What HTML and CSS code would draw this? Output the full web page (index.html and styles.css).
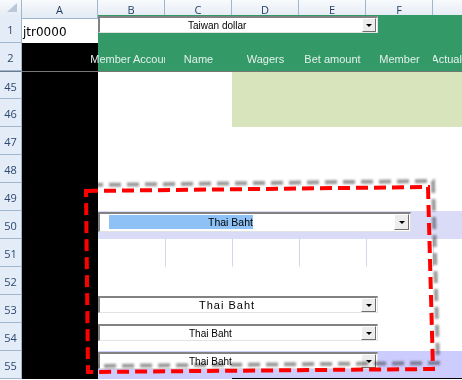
FILE: index.html
```html
<!DOCTYPE html>
<html lang="en">
  <head>
    <meta charset="UTF-8" />
    <meta name="viewport" content="width=device-width, initial-scale=1.0" />
    <title>Hoja de apuestas</title>
    <link rel="stylesheet" href="styles.css">
  </head>
  <body>
    <div class="sheet">
      <!-- Cabecera de columnas -->
      <div class="row head">
        <div class="corner">
          <svg width="22" height="14" viewBox="0 0 22 14"><polygon points="17,3 17,12 7,12" fill="#b9c7d9" /></svg>
        </div>
        <div class="col">A</div>
        <div class="col">B</div>
        <div class="col">C</div>
        <div class="col">D</div>
        <div class="col">E</div>
        <div class="col">F</div>
        <div class="col"></div>
      </div>

      <div class="row">
        <div class="num">1</div>
        <div class="cell user">jtr0000</div>
        <div class="band green">
          <div class="combo combo-top">
            <div class="combo-text">Taiwan dollar</div>
            <div class="combo-btn"></div>
          </div>
        </div>
      </div>

      <div class="row">
        <div class="num">2</div>
        <div class="cell black"></div>
        <div class="cell green title spill">Member Account</div>
        <div class="cell green title">Name</div>
        <div class="cell green title">Wagers</div>
        <div class="cell green title">Bet amount</div>
        <div class="cell green title">Member</div>
        <div class="cell green title">Actual amount</div>
      </div>

      <div class="row r45">
        <div class="num">45</div>
        <div class="cell black"></div>
        <div class="cell"></div>
        <div class="cell"></div>
        <div class="band-d light-green"></div>
      </div>
      <div class="row">
        <div class="num">46</div>
        <div class="cell black"></div>
        <div class="cell"></div>
        <div class="cell"></div>
        <div class="band-d light-green"></div>
      </div>
      <div class="row">
        <div class="num">47</div>
        <div class="cell black"></div>
      </div>
      <div class="row">
        <div class="num">48</div>
        <div class="cell black"></div>
      </div>
      <div class="row">
        <div class="num">49</div>
        <div class="cell black"></div>
      </div>

      <div class="row">
        <div class="num">50</div>
        <div class="cell black"></div>
        <div class="band lavender">
          <div class="combo combo-wide">
            <div class="combo-text"><span class="selected">Thai Baht</span></div>
            <div class="combo-btn"></div>
          </div>
        </div>
      </div>

      <div class="row">
        <div class="num">51</div>
        <div class="cell black"></div>
        <div class="cell"></div>
        <div class="cell gridline"></div>
        <div class="cell gridline"></div>
        <div class="cell gridline"></div>
        <div class="cell gridline"></div>
        <div class="cell gridline"></div>
      </div>
      <div class="row">
        <div class="num">52</div>
        <div class="cell black"></div>
      </div>

      <div class="row">
        <div class="num">53</div>
        <div class="cell black"></div>
        <div class="band">
          <div class="combo combo-spaced">
            <div class="combo-text">Thai Baht</div>
            <div class="combo-btn"></div>
          </div>
        </div>
      </div>
      <div class="row">
        <div class="num">54</div>
        <div class="cell black"></div>
        <div class="band">
          <div class="combo combo-small">
            <div class="combo-text">Thai Baht</div>
            <div class="combo-btn"></div>
          </div>
        </div>
      </div>
      <div class="row">
        <div class="num">55</div>
        <div class="cell black"></div>
        <div class="band lavender last">
          <div class="combo combo-small">
            <div class="combo-text">Thai Baht</div>
            <div class="combo-btn"></div>
          </div>
        </div>
      </div>

      <!-- Marca roja dibujada encima -->
      <svg class="mark" width="462" height="380" viewBox="0 0 462 380">
        <defs>
          <filter id="blur"><feGaussianBlur stdDeviation="1.1" /></filter>
        </defs>
        <path class="mark-shadow" d="M91 185 L433 181 L438 363 L93 366 Z" filter="url(#blur)" />
        <path class="mark-line" d="M86 191 L428 187 L433 369 L88 372 Z" />
      </svg>
    </div>
  </body>
</html>
```

FILE: styles.css
```css
body {
  margin: 0;
  background-color: white;
  font-family: "Liberation Sans", Arial, sans-serif;
  overflow: hidden;
}

.sheet {
  position: relative;
  width: 462px;
  height: 380px;
  overflow: hidden;
}

.row {
  display: grid;
  grid-template-columns: 22px 76px 67px 67px 67px 67px 67px 67px;
  width: 500px;
  height: 28px;
}

/* cabecera */
.head {
  height: 15px;
}

.corner,
.col {
  box-sizing: border-box;
  background: linear-gradient(#f8fafd, #e3eaf4);
  border-bottom: 1px solid #9eb6ce;
  border-right: 1px solid #9eb6ce;
}

.col {
  display: flex;
  justify-content: center;
  align-items: center;
  font-family: "Open Sans", sans-serif;
  font-size: 11px;
  color: #1f3a5f;
}

.num {
  box-sizing: border-box;
  display: flex;
  justify-content: center;
  align-items: center;
  padding-top: 2px;
  background-color: #e4ecf7;
  border-right: 1px solid #9eb6ce;
  border-bottom: 1px solid #9eb6ce;
  font-family: "Open Sans", sans-serif;
  font-size: 11px;
  color: #2c4870;
}

.cell {
  box-sizing: border-box;
  overflow: hidden;
}

.user {
  padding: 10px 0 0 1px;
  font-family: "DejaVu Sans", sans-serif;
  font-size: 12px;
  color: black;
}

.black {
  background-color: black;
}

.green {
  background-color: #339966;
}

.light-green {
  background-color: #d8e4bc;
}

.lavender {
  background-color: #d9dbf7;
}

.band {
  grid-column: 3 / -1;
}

.band-d {
  box-sizing: border-box;
  grid-column: 5 / -1;
}

.last {
  background: linear-gradient(#000, #000) 134px 100% / 100% 1px no-repeat, #ccccfe;
}

/* fila de titulos */
.title {
  display: flex;
  justify-content: center;
  align-items: flex-end;
  padding-bottom: 5px;
  font-size: 11px;
  line-height: 13px;
  white-space: nowrap;
  color: #e4f1ee;
}

.spill {
  overflow: visible;
  clip-path: inset(0 0 0 -30px);
}

.r45 > * {
  border-top: 1px solid #767676;
}

.r45 > .num {
  border-top-color: #6e7b8c;
}

.gridline {
  border-left: 1px solid #d0d7e5;
  border-bottom: 1px solid white;
}

/* listas desplegables */
.combo {
  box-sizing: border-box;
  display: flex;
  width: 280px;
  height: 17px;
  margin-top: 1px;
  background-color: white;
  border-style: solid;
  border-width: 2px 1px 1px 2px;
  border-color: #828282 #e2e2e2 #e2e2e2 #828282;
}

.combo-text {
  flex: 1;
  display: flex;
  align-items: center;
  white-space: nowrap;
  font-size: 10px;
  color: black;
}

.combo-btn {
  box-sizing: border-box;
  display: flex;
  justify-content: center;
  align-items: center;
  width: 14px;
  margin-right: 1px;
  background-color: #ededed;
  border: 1px solid;
  border-color: white #6f6f6f #6f6f6f white;
}

.combo-btn::after {
  content: "";
  border-left: 3px solid transparent;
  border-right: 3px solid transparent;
  border-top: 3px solid black;
  margin-top: 1px;
}

.combo-top .combo-text {
  padding-left: 88px;
}

.combo-wide {
  width: 313px;
  height: 20px;
}

.combo-wide .combo-text {
  align-items: flex-start;
  padding: 1px 0 0 9px;
}

.combo-wide .combo-btn {
  width: 15px;
  margin-bottom: 1px;
}

.selected {
  padding-left: 99px;
  height: 14px;
  line-height: 14px;
  font-size: 10.5px;
  background-color: #8ec2f7;
}

.combo-spaced .combo-text {
  padding-left: 99px;
  font-size: 11px;
  letter-spacing: 1px;
}

.combo-small .combo-text {
  padding-left: 89px;
}

.combo-spaced .combo-btn,
.combo-small .combo-btn {
  width: 15px;
}

/* marca */
.mark {
  position: absolute;
  top: 0;
  left: 0;
  pointer-events: none;
}

.mark-shadow {
  fill: none;
  stroke: #9a9a9a;
  stroke-width: 4;
  stroke-dasharray: 12 6;
  mix-blend-mode: multiply;
}

.mark-line {
  fill: none;
  stroke: #ff0000;
  stroke-width: 4;
  stroke-dasharray: 12 6;
}
```
